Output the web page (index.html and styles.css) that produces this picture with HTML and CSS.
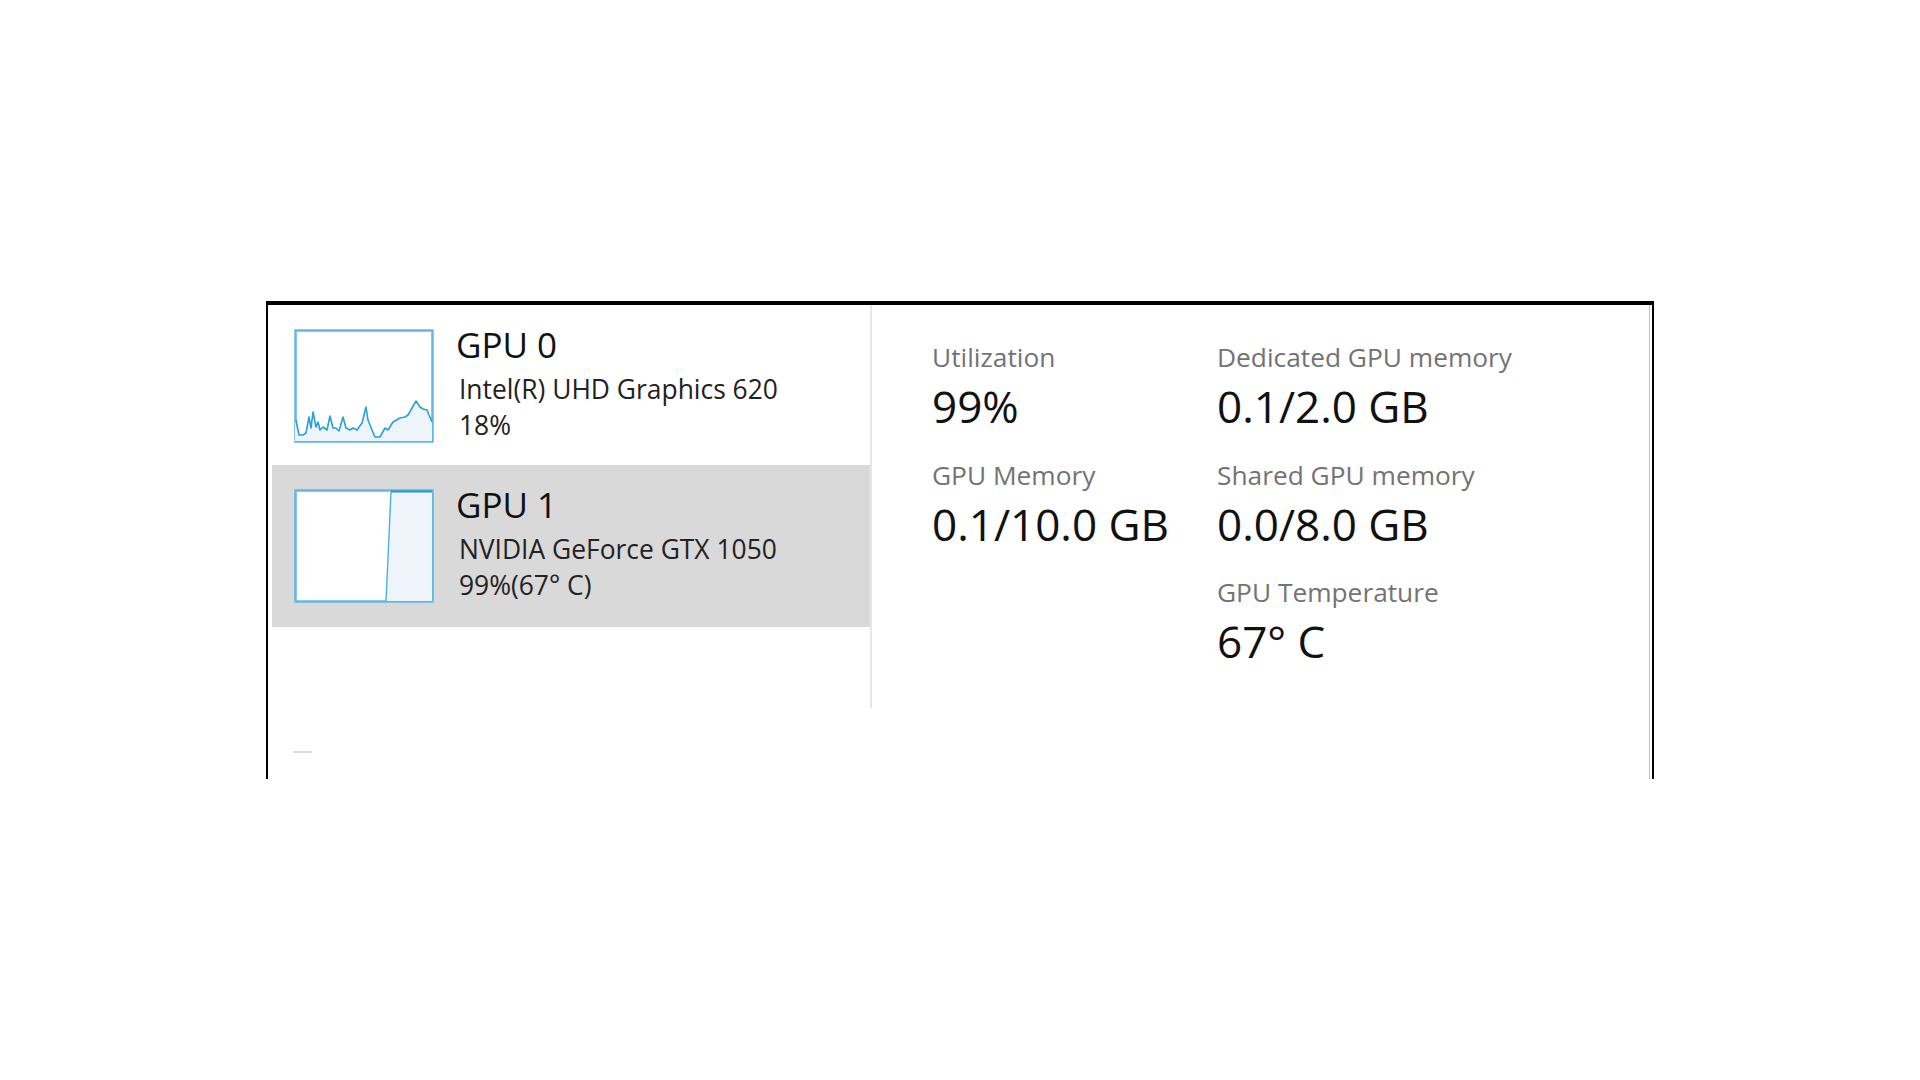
FILE: index.html
```html
<!DOCTYPE html>
<html lang="en">
<head>
<meta charset="utf-8">
<title>GPU</title>
<link rel="stylesheet" href="styles.css">
</head>
<body>
<div class="frame">
  <div class="main">
    <div class="list">
      <div class="item">
        <svg class="thumb" width="140" height="114" viewBox="0 0 140 114">
          <rect x="1.5" y="1.5" width="137" height="111" fill="#ffffff" stroke="#63b8e1" stroke-width="2.5"/>
          <polygon fill="#eef5fa" points="1,91 5,106 9,106 12,104 15,88 17,99 19,83 22,98 24,93 26,101 29,98 33,101 36,87 39,99 42,99 45,102 49,88 52,99 56,101 59,99 63,101 68,94 72,78 74,91 78,101 81,108 86,108 91,99 94,101 99,93 106,89 111,88 114,86 118,79 122,72 126,78 129,80 133,81 135,86 138,93 138,112 1,112"/>
          <polyline fill="none" stroke="#2a9fd8" stroke-width="1.6" stroke-linejoin="round" points="2,91 5,106 9,106 12,104 15,88 17,99 19,83 22,98 24,93 26,101 29,98 33,101 36,87 39,99 42,99 45,102 49,88 52,99 56,101 59,99 63,101 68,94 72,78 74,91 78,101 81,108 86,108 91,99 94,101 99,93 106,89 111,88 114,86 118,79 122,72 126,78 129,80 133,81 135,86 138,93"/>
        </svg>
        <div class="info">
          <div class="title">GPU 0</div>
          <div class="sub">Intel(R) UHD Graphics 620</div>
          <div class="sub">18%</div>
        </div>
      </div>
      <div class="item selected">
        <svg class="thumb" width="140" height="114" viewBox="0 0 140 114">
          <rect x="1.5" y="1.5" width="137" height="111" fill="#ffffff" stroke="#63b8e1" stroke-width="2.5"/>
          <polygon fill="#eef5fa" points="97,3 138,3 138,112 92,112"/>
          <polyline fill="none" stroke="#4fb0de" stroke-width="1.4" points="92,112 97,3"/>
          <polyline fill="none" stroke="#1e94d2" stroke-width="1.8" points="97,2.5 138,2.5"/>
        </svg>
        <div class="info">
          <div class="title">GPU 1</div>
          <div class="sub">NVIDIA GeForce GTX 1050</div>
          <div class="sub">99%(67° C)</div>
        </div>
      </div>
    </div>
    <div class="details">
      <div class="stat">
        <div class="label">Utilization</div>
        <div class="value">99%</div>
      </div>
      <div class="stat">
        <div class="label">Dedicated GPU memory</div>
        <div class="value">0.1/2.0 GB</div>
      </div>
      <div class="stat">
        <div class="label">GPU Memory</div>
        <div class="value">0.1/10.0 GB</div>
      </div>
      <div class="stat">
        <div class="label">Shared GPU memory</div>
        <div class="value">0.0/8.0 GB</div>
      </div>
      <div class="stat empty"></div>
      <div class="stat">
        <div class="label">GPU Temperature</div>
        <div class="value">67° C</div>
      </div>
    </div>
  </div>
  <div class="footer"><span class="dash"></span></div>
</div>
</body>
</html>
```

FILE: styles.css
```css
html, body {
  margin: 0;
  padding: 0;
  background: #ffffff;
}

body {
  font-family: "Open Sans", "Noto Sans", "DejaVu Sans", sans-serif;
  color: #111111;
}

.frame {
  box-sizing: border-box;
  margin-left: 266px;
  margin-top: 301px;
  width: 1388px;
  height: 478px;
  border-top: 4px solid #000000;
  border-left: 2px solid #000000;
  border-right: 2px solid #000000;
  box-shadow: inset -2px 0 0 #ffffff, inset -3px 0 0 #c4c4c4;
  display: flex;
  flex-direction: column;
}

.main {
  display: flex;
  height: 403px;
}

.list {
  box-sizing: border-box;
  width: 604px;
  padding-left: 4px;
  border-right: 2px solid #e6e6e6;
  display: flex;
  flex-direction: column;
}

.item {
  display: flex;
  align-items: flex-start;
  gap: 22px;
  padding-left: 22px;
  padding-top: 24px;
  height: 160px;
  box-sizing: border-box;
}

.item.selected {
  background: #d9d9d9;
  height: 162px;
}

.thumb {
  display: block;
  flex: none;
}

.info {
  margin-top: -5px;
}

.title {
  font-size: 35px;
  line-height: 41px;
  color: #111111;
  margin-bottom: 6px;
}

.sub {
  font-size: 26.4px;
  line-height: 36px;
  color: #222222;
  margin-left: 3px;
}

.details {
  flex: 1;
  display: grid;
  grid-template-columns: 285px auto;
  grid-auto-rows: 117.5px;
  padding-left: 60px;
  padding-top: 34px;
  align-content: start;
}

.label {
  font-size: 26.3px;
  line-height: 36px;
  color: #737373;
  margin-bottom: 5px;
}

.value {
  font-size: 44px;
  line-height: 52px;
  color: #111111;
}

.footer {
  padding-top: 43px;
  padding-left: 25px;
}

.dash {
  display: block;
  width: 19px;
  height: 2px;
  background: #dddddd;
}
```
